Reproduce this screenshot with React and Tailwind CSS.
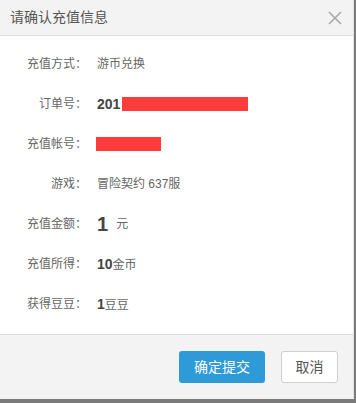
import React from 'react';

const rows = [
  { label: '充值方式：', value: <span>游币兑换</span> },
  {
    label: '订单号：',
    value: (
      <span className="flex items-center">
        <span className="font-bold text-[14px] text-[#444]">201</span>
        <span className="inline-block w-[126px] h-[14px] bg-[#ff3b3b] ml-[2px]" />
      </span>
    ),
  },
  {
    label: '充值帐号：',
    value: <span className="inline-block w-[65px] h-[14px] bg-[#ff3b3b] -ml-px" />,
  },
  { label: '游戏：', value: <span>冒险契约 637服</span> },
  {
    label: '充值金额：',
    value: (
      <span className="flex items-center gap-[8px]">
        <span className="font-bold text-[20px] text-[#444] leading-none">1</span>
        <span>元</span>
      </span>
    ),
  },
  {
    label: '充值所得：',
    value: (
      <span>
        <span className="font-bold text-[14px] text-[#444]">10</span>金币
      </span>
    ),
  },
  {
    label: '获得豆豆：',
    value: (
      <span>
        <span className="font-bold text-[14px] text-[#444]">1</span>豆豆
      </span>
    ),
  },
];

const App = () => {
  return (
    <div
      className="w-[356px] h-[403px] bg-[#7a7a7a] flex flex-col"
      style={{ fontFamily: '"Liberation Sans", "Noto Sans CJK SC", sans-serif' }}
    >
      <div className="w-[354px] flex-1 flex flex-col bg-white border-r border-[#e2e2e2]">
        <div className="h-[36px] bg-[#f3f3f3] border-b border-[#dcdcdc] flex items-center justify-between pl-[10px] pr-[10px]">
          <span className="text-[14px] text-[#555]">请确认充值信息</span>
          <svg width="14" height="14" viewBox="0 0 14 14" className="mr-[1px]">
            <path d="M1 1 L13 13 M13 1 L1 13" stroke="#a6a6a6" strokeWidth="1.5" />
          </svg>
        </div>
        <div className="flex-1 flex flex-col pt-[8px]">
          {rows.map((r, i) => (
            <div key={i} className="h-[40px] flex items-center text-[12px] text-[#666]">
              <span className="w-[88px] text-right pr-[1px]">{r.label}</span>
              <span className="pl-[9px] flex items-center">{r.value}</span>
            </div>
          ))}
        </div>
        <div className="h-[65px] bg-[#f3f3f3] border-t border-[#dedede] flex items-center justify-end gap-[16px] pr-[15px]">
          <button className="w-[86px] h-[32px] bg-[#2e9ad8] text-white text-[14px] rounded-[3px]">
            确定提交
          </button>
          <button className="w-[57px] h-[32px] bg-white border border-[#cfcfcf] text-[#555] text-[14px] rounded-[3px]">
            取消
          </button>
        </div>
      </div>
      <div className="h-[4px]" />
    </div>
  );
};

export default App;
